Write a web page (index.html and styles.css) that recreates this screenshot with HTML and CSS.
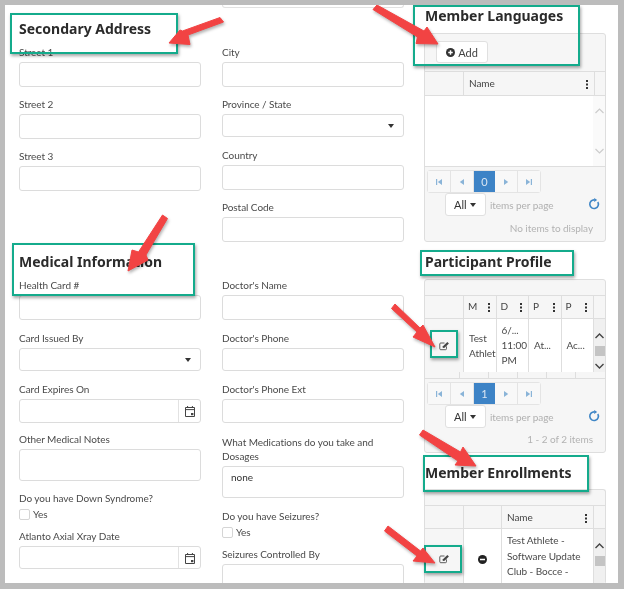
FILE: index.html
```html
<!DOCTYPE html>
<html lang="en">
<head>
<meta charset="utf-8">
<title>Member form</title>
<link rel="stylesheet" href="styles.css">
</head>
<body>
<svg class="defs" width="0" height="0" aria-hidden="true">
  <symbol id="cal" viewBox="0 0 12 12"><path d="M1.500 2.500h9v9h-9zM1.500 4.600h9M3.600 1v2M8.400 1v2" fill="none" stroke="#444" stroke-width="1"/><rect x="7" y="8" width="2.400" height="2.200" fill="#444"/></symbol>
  <symbol id="edit" viewBox="0 0 14 12"><path d="M9.500 6.500v3a1.200 1.200 0 0 1-1.200 1.200H2.200A1.200 1.200 0 0 1 1 9.500V3.400a1.200 1.200 0 0 1 1.200-1.200H7" fill="none" stroke="#444" stroke-width="1.100"/><path d="M5 6.200 10.600 .8l2 2-5.500 5.500-2.400.4z" fill="#444"/></symbol>
  <symbol id="refresh" viewBox="0 0 12 12"><path d="M9.800 4A4.300 4.300 0 1 1 6.500 1.900" fill="none" stroke="#3f86c6" stroke-width="1.600"/><path d="M6.200 0v4l3-2z" fill="#3f86c6"/></symbol>
  <symbol id="first" viewBox="0 0 8 8"><path d="M1 1h1.200v6H1zM7 1v6L2.800 4z" fill="#8ab4d8"/></symbol>
  <symbol id="prev" viewBox="0 0 8 8"><path d="M6 1v6L1.800 4z" fill="#8ab4d8"/></symbol>
  <symbol id="next" viewBox="0 0 8 8"><path d="M2 1v6l4.200-3z" fill="#8ab4d8"/></symbol>
  <symbol id="last" viewBox="0 0 8 8"><path d="M7 1H5.800v6H7zM1 1v6l4.200-3z" fill="#8ab4d8"/></symbol>
</svg>
<main class="sheet">
  <section class="col col-left">
    <h2 class="title title-first">Secondary Address</h2>
    <div class="f"><label>Street 1</label><div class="in"></div></div>
    <div class="f"><label>Street 2</label><div class="in"></div></div>
    <div class="f"><label>Street 3</label><div class="in"></div></div>
    <h2 class="title title-medical">Medical Information</h2>
    <div class="f m11"><label>Health Card #</label><div class="in"></div></div>
    <div class="f m11"><label>Card Issued By</label><div class="in in-sel"><span class="caret"></span></div></div>
    <div class="f m9"><label>Card Expires On</label><div class="in in-24 in-date"><span class="cal"><svg width="12" height="12"><use href="#cal"/></svg></span></div></div>
    <div class="f"><label>Other Medical Notes</label><div class="in in-area"></div></div>
    <div class="f m8"><label>Do you have Down Syndrome?</label><div class="chk"><span class="box"></span>Yes</div></div>
    <div class="f"><label>Atlanto Axial Xray Date</label><div class="in in-sel in-date"><span class="cal"><svg width="12" height="12"><use href="#cal"/></svg></span></div></div>
  </section>

  <section class="col col-mid">
    <div class="clip"></div>
    <div class="f"><label>City</label><div class="in"></div></div>
    <div class="f m11"><label>Province / State</label><div class="in in-sel"><span class="caret"></span></div></div>
    <div class="f"><label>Country</label><div class="in"></div></div>
    <div class="f m36"><label>Postal Code</label><div class="in"></div></div>
    <div class="f m11"><label>Doctor's Name</label><div class="in"></div></div>
    <div class="f m11"><label>Doctor's Phone</label><div class="in in-sel"></div></div>
    <div class="f m12"><label>Doctor's Phone Ext</label><div class="in in-24"></div></div>
    <div class="f m11"><label>What Medications do you take and<br>Dosages</label><div class="in in-area">none</div></div>
    <div class="f m8"><label>Do you have Seizures?</label><div class="chk"><span class="box"></span>Yes</div></div>
    <div class="f"><label>Seizures Controlled By</label><div class="in"></div></div>
  </section>

  <section class="col col-right">
    <h2 class="title title-lang">Member Languages</h2>
    <div class="grid grid-lang">
      <div class="tools"><button class="btn"><svg width="9" height="9" viewBox="0 0 10 10"><circle cx="5" cy="5" r="5" fill="#333"/><path d="M2.500 5h5M5 2.500v5" stroke="#fff" stroke-width="1.600"/></svg>Add</button></div>
      <div class="head"><div class="th"></div><div class="th th-name">Name<span class="dots"></span></div><div class="th"></div></div>
      <div class="lang-body"><div class="track"><svg width="9" height="6" viewBox="0 0 9 6"><path d="M.5 5 4.500 1l4 4" fill="none" stroke="#ccc" stroke-width="1.200"/></svg><svg width="9" height="6" viewBox="0 0 9 6"><path d="M.5 1l4 4 4-4" fill="none" stroke="#ccc" stroke-width="1.200"/></svg></div></div>
      <div class="foot">
        <div class="pager"><span class="pg"><svg width="8" height="8"><use href="#first"/></svg></span><span class="pg"><svg width="8" height="8"><use href="#prev"/></svg></span><span class="pg on">0</span><span class="pg"><svg width="8" height="8"><use href="#next"/></svg></span><span class="pg"><svg width="8" height="8"><use href="#last"/></svg></span></div>
        <div class="size"><span class="sel">All<span class="caret"></span></span><span class="ipp">items per page</span><svg class="rf" width="12" height="12"><use href="#refresh"/></svg></div>
        <div class="count count-empty">No items to display</div>
      </div>
    </div>

    <h2 class="title title-next">Participant Profile</h2>
    <div class="grid grid-part">
      <div class="tools tools-thin"></div>
      <div class="head head-part"><div class="th"></div><div class="th th-s">M<span class="dots"></span></div><div class="th th-s">D<span class="dots"></span></div><div class="th th-s">P<span class="dots"></span></div><div class="th th-s">P<span class="dots"></span></div><div class="th"></div></div>
      <div class="row">
        <div class="td td-grey"><svg width="11" height="10"><use href="#edit"/></svg></div>
        <div class="td td-text">Test<br>Athlet</div>
        <div class="td td-text">6/...<br>11:00<br>PM</div>
        <div class="td td-text">At...</div>
        <div class="td td-text">Ac...</div>
        <div class="bar"><svg width="9" height="6" viewBox="0 0 9 6"><path d="M.5 5 4.500 1l4 4" fill="none" stroke="#444" stroke-width="1.400"/></svg><span class="thumb"></span><svg width="9" height="6" viewBox="0 0 9 6"><path d="M.5 1l4 4 4-4" fill="none" stroke="#444" stroke-width="1.400"/></svg></div>
      </div>
      <div class="stub"><i></i><i></i><i></i><i></i><i></i><i></i></div>
      <div class="foot">
        <div class="pager"><span class="pg"><svg width="8" height="8"><use href="#first"/></svg></span><span class="pg"><svg width="8" height="8"><use href="#prev"/></svg></span><span class="pg on">1</span><span class="pg"><svg width="8" height="8"><use href="#next"/></svg></span><span class="pg"><svg width="8" height="8"><use href="#last"/></svg></span></div>
        <div class="size"><span class="sel">All<span class="caret"></span></span><span class="ipp">items per page</span><svg class="rf" width="12" height="12"><use href="#refresh"/></svg></div>
        <div class="count">1 - 2 of 2 items</div>
      </div>
    </div>

    <h2 class="title title-enroll">Member Enrollments</h2>
    <div class="grid grid-enr">
      <div class="tools tools-thin"></div>
      <div class="head"><div class="th"></div><div class="th th-min"></div><div class="th th-name2">Name<span class="dots"></span></div><div class="th"></div></div>
      <div class="row row-enr">
        <div class="td td-grey"><svg width="11" height="10"><use href="#edit"/></svg></div>
        <div class="td td-min"><svg width="9" height="9" viewBox="0 0 10 10"><circle cx="5" cy="5" r="5" fill="#222"/><path d="M2.200 5h5.600" stroke="#fff" stroke-width="1.800"/></svg></div>
        <div class="td td-name">Test Athlete - Software Update Club - Bocce -</div>
        <div class="bar bar-top"><svg width="9" height="6" viewBox="0 0 9 6"><path d="M.5 5 4.500 1l4 4" fill="none" stroke="#444" stroke-width="1.400"/></svg><span class="thumb"></span></div>
      </div>
    </div>
  </section>

  <div class="mark mark-sec"></div>
  <div class="mark mark-lang"></div>
  <div class="mark mark-med"></div>
  <div class="mark mark-part"></div>
  <div class="mark mark-edit1"></div>
  <div class="mark mark-enr"></div>
  <div class="mark mark-edit2"></div>

  <svg class="arrows" width="613" height="578" viewBox="5 5 613 578">
    <polygon points="220,17.500 223.500,22 188,35 190,44.500 169,43 180,30 182.500,31"/>
    <polygon points="377,5 373,9.500 417.500,37 416,43.500 438,44 427,27 424,31"/>
    <polygon points="162.500,215 167.500,218.500 146,255 148,260 128,271 132,250 138.500,252"/>
    <polygon points="395,304 391.500,308.500 417,332 413,337 435,347 423,325 420,328"/>
    <polygon points="423,430 419.500,435 458,461 455,465 476,466 463,447 460.500,452"/>
    <polygon points="388,526 384.500,531 417,556 413,561 435,563 423,548 420.500,551"/>
  </svg>
</main>
</body>
</html>
```
FILE: styles.css
```css
* { box-sizing: border-box; }
html, body { margin: 0; height: 589px; overflow: hidden; }
body { background: #bcbcbc; font-family: Lato, Roboto, sans-serif; color: #4a4a4a; font-size: 10px; letter-spacing: -.05px; }
.defs { position: absolute; }
.sheet { position: relative; margin: 5px 0 0 5px; width: 613px; height: 578px; background: #fff; display: flex; overflow: hidden; filter: blur(.4px); }
.col { width: 182px; flex: none; }
.col-left { margin: 14px 21px 0 14px; }
.col-mid { margin-right: 20px; }
.title { margin: 0 0 6px; height: 22px; font-family: "Noto Sans", sans-serif; font-size: 14px; line-height: 22px; font-weight: 700; color: #2b2b2b; white-space: nowrap; letter-spacing: 0; }
.col-right .title { padding-left: 1px; }
.title-first { height: 21px; margin-bottom: 5px; line-height: 20px; }
.title-medical { margin: 60px 0 5px; }
.title-next { margin: 9px 0 6px; }
.title-enroll { margin: 9px 0 5px; }
.f { margin-bottom: 10px; }
.f label { display: block; line-height: 14px; margin-bottom: 3px; }
.m8 { margin-bottom: 8px; }
.m9 { margin-bottom: 9px; }
.m11 { margin-bottom: 11px; }
.m12 { margin-bottom: 12px; }
.m36 { margin-bottom: 36px; }
.in { height: 25px; border: 1px solid #dcdcdc; border-radius: 3px; background: #fff; position: relative; }
.in-sel { height: 23px; }
.in-24 { height: 24px; }
.in-area { height: 32px; padding: 4px 8px; color: #333; }
.clip { height: 3px; margin-bottom: 37px; border: 1px solid #e2e2e2; border-top: 0; border-radius: 0 0 3px 3px; }
.caret { position: absolute; right: 9px; top: 9px; border: 3.500px solid transparent; border-top: 4px solid #333; border-bottom: 0; }
.cal { position: absolute; right: 0; top: 0; bottom: 0; width: 22px; border-left: 1px solid #e2e2e2; display: flex; align-items: center; justify-content: center; }
.chk { display: flex; align-items: center; gap: 3px; height: 14px; margin-top: -1px; }
.box { width: 11px; height: 11px; border: 1px solid #d5d5d5; border-radius: 2px; }

.grid { border: 1px solid #dedede; border-radius: 3px; background: #f6f6f6; }
.grid-lang { height: 209px; }
.grid-part { height: 174px; }
.grid-enr { height: 95px; overflow: hidden; border-bottom: 0; }
.tools { height: 38px; padding: 7px 11px; border-bottom: 1px solid #dedede; }
.tools-thin { height: 16px; padding: 0; }
.btn { display: flex; align-items: center; justify-content: center; gap: 3px; width: 52px; height: 22px; padding: 0; background: #fff; border: 1px solid #e0e0e0; border-radius: 3px; font: inherit; font-size: 11px; color: #444; }
.head { display: flex; height: 24px; border-bottom: 1px solid #dedede; }
.grid-part .head, .grid-enr .head { height: 23px; }
.th { position: relative; width: 39px; border-right: 1px solid #dedede; line-height: 23px; padding-left: 5px; color: #444; }
.th:last-child { border: 0; flex: 1; }
.th-name { width: 131px; padding-left: 5px; }
.th-s { width: 32.500px; padding-left: 4px; }
.th-min { width: 38px; }
.th-name2 { width: 92px; }
.dots { position: absolute; right: 6px; top: 8px; width: 2px; height: 2px; background: #333; box-shadow: 0 3.500px #333, 0 7px #333; }
.head-part .th { line-height: 20px; }
.head-part .dots { top: 7px; }
.lang-body { height: 71px; background: #fff; border-bottom: 1px solid #dedede; position: relative; }
.track { position: absolute; right: 0; top: 0; bottom: 0; width: 12px; background: #fafafa; display: flex; flex-direction: column; justify-content: space-between; align-items: center; padding: 12px 0; }
.foot { position: relative; padding: 3px 0 0 2px; }
.pager { display: flex; width: 114px; height: 23px; border: 1px solid #e4e4e4; border-radius: 3px; }
.pg { flex: 1; display: flex; align-items: center; justify-content: center; border-right: 1px solid #e4e4e4; background: #f8f8f8; }
.pg:last-child { border: 0; }
.pg.on { background: #3d83c6; color: #dbe7f3; border: 0; font-size: 11px; }
.size { display: flex; align-items: center; gap: 4px; margin: 0 0 0 18px; height: 23px; position: relative; }
.sel { position: relative; width: 41px; height: 23px; padding-left: 8px; line-height: 21px; background: #fff; border: 1px solid #e0e0e0; border-radius: 3px; color: #333; font-size: 11px; }
.ipp { color: #b0b0b0; }
.rf { position: absolute; right: 5px; top: 5px; }
.count { text-align: right; color: #b3b3b3; padding: 5px 12px 0 0; }
.count-empty { padding-top: 6px; }
.row { display: flex; height: 53px; background: #fff; }
.row-enr { height: 60px; }
.td { display: flex; align-items: center; justify-content: center; border-right: 1px solid #dedede; }
.td-grey { width: 39px; background: #f6f6f6; }
.td-text { width: 32.500px; justify-content: flex-start; padding-left: 5px; line-height: 15px; overflow: hidden; white-space: nowrap; }
.td-min { width: 38px; }
.td-name { width: 92px; padding: 4px 0 0 5px; line-height: 15.500px; display: block; }
.bar { flex: 1; background: #f0f0f0; display: flex; flex-direction: column; align-items: center; justify-content: space-between; padding: 14px 0 3px; }
.bar-top { justify-content: flex-start; gap: 7px; }
.thumb { width: 10px; height: 10px; background: #c4c4c4; }
.stub { display: flex; height: 7px; border-bottom: 1px solid #dedede; }
.stub i { width: 32.500px; border-right: 1px solid #dedede; }
.stub i:first-child { width: 39px; }
.stub i:last-child { border: 0; }

.mark { position: absolute; border: 2px solid #14ab8c; box-shadow: 1px 2px 3px rgba(0,0,0,.35); }
.mark-sec { left: 5px; top: 8px; width: 168px; height: 41px; }
.mark-lang { left: 408px; top: 0; width: 167px; height: 61px; }
.mark-med { left: 7px; top: 238px; width: 183px; height: 53px; }
.mark-part { left: 415px; top: 245px; width: 154px; height: 26px; }
.mark-edit1 { left: 425px; top: 325px; width: 28px; height: 28px; }
.mark-enr { left: 418px; top: 450px; width: 166px; height: 37px; }
.mark-edit2 { left: 419px; top: 540px; width: 38px; height: 28px; }
.arrows { position: absolute; left: 0; top: 0; filter: drop-shadow(1px 2px 1.500px rgba(0,0,0,.3)); }
.arrows polygon { fill: #f24343; stroke: #f24343; stroke-width: 1; stroke-linejoin: round; }
```
